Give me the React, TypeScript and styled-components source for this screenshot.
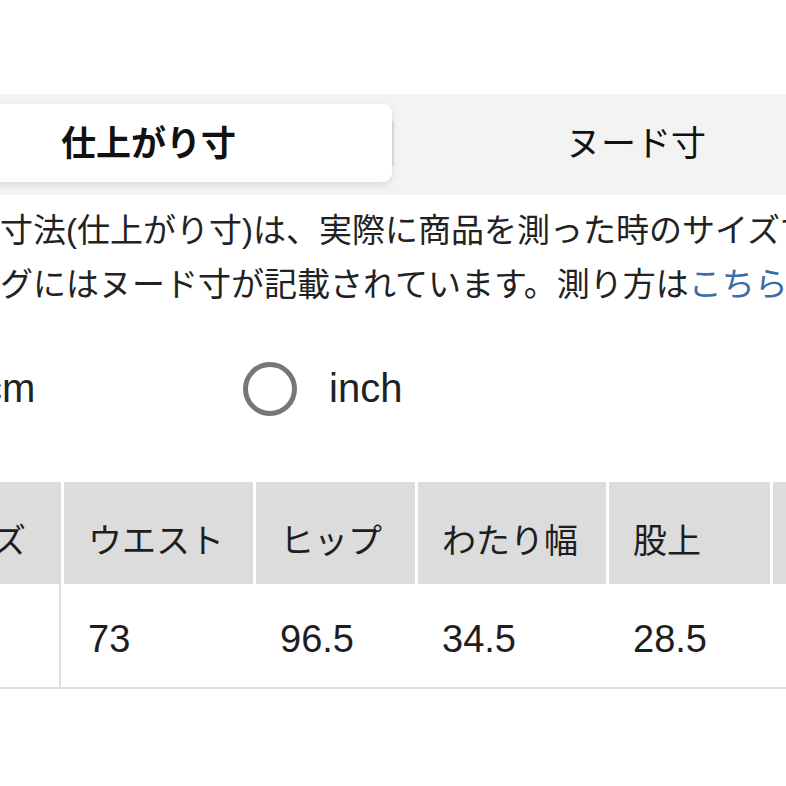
import React from "react";
import styled, { createGlobalStyle } from "styled-components";

const GlobalStyle = createGlobalStyle`
  html, body {
    margin: 0;
    padding: 0;
    background: #ffffff;
  }
  body {
    font-family: "Liberation Sans", "Noto Sans CJK JP", sans-serif;
    color: #222222;
  }
`;

const Page = styled.div`
  width: 786px;
  height: 786px;
  overflow: hidden;
  box-sizing: border-box;
  padding-top: 94px;
  background: #ffffff;
`;

const SegmentBar = styled.div`
  display: flex;
  box-sizing: border-box;
  width: 1000px;
  height: 101px;
  margin-left: -105px;
  padding: 10px 10px 13px;
  background: #f3f3f3;
`;

const SegmentTab = styled.div<{ $active?: boolean; $width: number }>`
  display: flex;
  align-items: center;
  justify-content: center;
  box-sizing: border-box;
  width: ${(p) => p.$width}px;
  flex-shrink: 0;
  padding-bottom: 6px;
  border-radius: 9px;
  font-size: 35px;
  font-weight: ${(p) => (p.$active ? 700 : 400)};
  color: #111111;
  background: ${(p) => (p.$active ? "#ffffff" : "transparent")};
  box-shadow: ${(p) =>
    p.$active ? "0 3px 7px rgba(0, 0, 0, 0.10)" : "none"};
`;

const SegmentDivider = styled.div`
  width: 2px;
  height: 45px;
  align-self: center;
  background: #d4d4d4;
`;

const Notice = styled.p`
  margin: 9px 0 0 -33px;
  width: 1200px;
  font-size: 33px;
  line-height: 54px;
  white-space: nowrap;
  color: #222222;
`;

const Link = styled.a`
  color: #3b6ea6;
  text-decoration: none;
`;

const RadioGroup = styled.div`
  display: flex;
  align-items: center;
  height: 53px;
  margin: 50px 0 0 -104px;
`;

const RadioOption = styled.label`
  display: flex;
  align-items: center;
  gap: 32px;
  width: 347px;
  flex-shrink: 0;
  font-size: 40px;
  color: #222222;
`;

const RadioCircle = styled.span<{ $checked?: boolean }>`
  display: flex;
  align-items: center;
  justify-content: center;
  box-sizing: border-box;
  width: 54px;
  height: 54px;
  border: 5px solid #777777;
  border-radius: 50%;

  &::after {
    content: "";
    display: ${(p) => (p.$checked ? "block" : "none")};
    width: 26px;
    height: 26px;
    border-radius: 50%;
    background: #333333;
  }
`;

const columns = "160px 189px 159px 188px 161px 200px";

const SizeTable = styled.div`
  margin: 67px 0 0 -99px;
  width: 1100px;
`;

const HeaderRow = styled.div`
  display: grid;
  grid-template-columns: ${columns};
  column-gap: 3px;
`;

const HeaderCell = styled.div`
  display: flex;
  align-items: center;
  box-sizing: border-box;
  height: 102px;
  padding: 10px 0 0 24px;
  background: #dcdcdc;
  font-size: 34px;
  color: #1e1e1e;
`;

const BodyRow = styled.div`
  display: grid;
  grid-template-columns: ${columns};
  column-gap: 3px;
  border-bottom: 2px solid #dedede;
`;

const BodyCell = styled.div<{ $first?: boolean }>`
  display: flex;
  align-items: center;
  box-sizing: border-box;
  height: 103px;
  padding: 8px 0 0 24px;
  font-size: 38px;
  color: #1e1e1e;
  border-right: ${(p) => (p.$first ? "2px solid #dedede" : "none")};
`;

const headers = ["サイズ", "ウエスト", "ヒップ", "わたり幅", "股上", "股下"];
const values = ["S", "73", "96.5", "34.5", "28.5", "76"];

export default function App() {
  return (
    <>
      <GlobalStyle />
      <Page>
        <SegmentBar>
          <SegmentTab $active $width={487}>
            仕上がり寸
          </SegmentTab>
          <SegmentDivider />
          <SegmentTab $width={484}>ヌード寸</SegmentTab>
        </SegmentBar>

        <Notice>
          ※寸法(仕上がり寸)は、実際に商品を測った時のサイズです。商品
          <br />
          タグにはヌード寸が記載されています。測り方は
          <Link href="#">こちら</Link>
        </Notice>

        <RadioGroup>
          <RadioOption>
            <RadioCircle $checked />
            cm
          </RadioOption>
          <RadioOption>
            <RadioCircle />
            inch
          </RadioOption>
        </RadioGroup>

        <SizeTable>
          <HeaderRow>
            {headers.map((h) => (
              <HeaderCell key={h}>{h}</HeaderCell>
            ))}
          </HeaderRow>
          <BodyRow>
            {values.map((v, i) => (
              <BodyCell key={i} $first={i === 0}>
                {v}
              </BodyCell>
            ))}
          </BodyRow>
        </SizeTable>
      </Page>
    </>
  );
}
